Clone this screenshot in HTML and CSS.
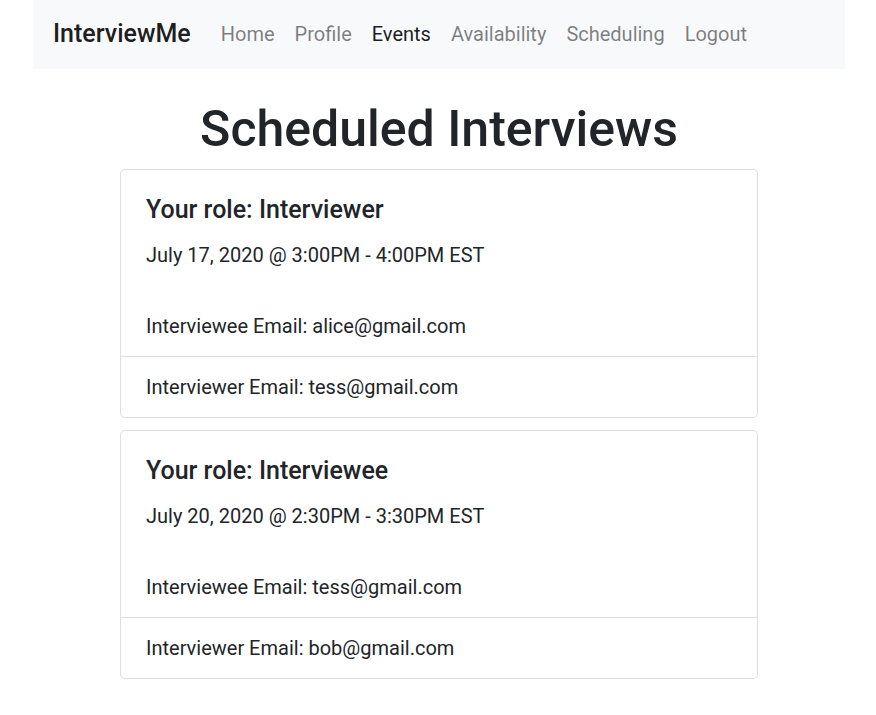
FILE: index.html
```html
<!DOCTYPE html>
<html lang="en">
<head>
<meta charset="utf-8">
<title>InterviewMe - Events</title>
<link rel="stylesheet" href="styles.css">
</head>
<body>
<div class="page">
  <nav class="navbar">
    <a class="brand" href="#">InterviewMe</a>
    <ul class="nav">
      <li><a class="nav-link" href="#">Home</a></li>
      <li><a class="nav-link" href="#">Profile</a></li>
      <li><a class="nav-link active" href="#">Events</a></li>
      <li><a class="nav-link" href="#">Availability</a></li>
      <li><a class="nav-link" href="#">Scheduling</a></li>
      <li><a class="nav-link" href="#">Logout</a></li>
    </ul>
  </nav>
  <h1 class="title">Scheduled Interviews</h1>
  <div class="cards">
    <div class="card">
      <div class="card-body">
        <h5 class="card-title">Your role: Interviewer</h5>
        <p class="card-text">July 17, 2020 @ 3:00PM - 4:00PM EST</p>
      </div>
      <ul class="list-group">
        <li class="list-item">Interviewee Email: alice@gmail.com</li>
        <li class="list-item">Interviewer Email: tess@gmail.com</li>
      </ul>
    </div>
    <div class="card">
      <div class="card-body">
        <h5 class="card-title">Your role: Interviewee</h5>
        <p class="card-text">July 20, 2020 @ 2:30PM - 3:30PM EST</p>
      </div>
      <ul class="list-group">
        <li class="list-item">Interviewee Email: tess@gmail.com</li>
        <li class="list-item">Interviewer Email: bob@gmail.com</li>
      </ul>
    </div>
  </div>
</div>
</body>
</html>
```
FILE: styles.css
```css
* { box-sizing: border-box; }
html, body { margin: 0; padding: 0; }
body {
  font-family: Roboto, "Liberation Sans", sans-serif;
  font-size: 20px;
  line-height: 1.5;
  color: #212529;
  background: #fff;
  padding-left: 2px;
}
.page {
  width: 812px;
  margin: 0 auto;
}
.navbar {
  display: flex;
  align-items: center;
  background: #f8f9fa;
  height: 69px;
  padding: 0 20px 2px;
}
.brand {
  font-size: 25px;
  font-weight: 500;
  color: rgba(0,0,0,.9);
  text-decoration: none;
  margin-right: 20px;
  line-height: 1.5;
}
.nav {
  display: flex;
  list-style: none;
  margin: 0;
  padding: 0;
}
.nav-link {
  display: block;
  padding: 10px;
  color: rgba(0,0,0,.5);
  text-decoration: none;
}
.nav-link.active { color: rgba(0,0,0,.9); }
.title {
  margin: 30px 0 10px;
  text-align: center;
  font-size: 50px;
  font-weight: 500;
  line-height: 1.2;
}
.cards {
  width: 638px;
  margin: 0 auto;
  display: flex;
  flex-direction: column;
  gap: 12px;
}
.card {
  border: 1px solid rgba(0,0,0,.125);
  border-radius: 5px;
  background: #fff;
}
.card-body {
  padding: 25px 25px 26px;
}
.card-title {
  margin: 0 0 15px;
  font-size: 25px;
  font-weight: 500;
  line-height: 1.2;
}
.card-text {
  margin: 0;
  line-height: 1.5;
}
.list-group {
  list-style: none;
  margin: 0;
  padding: 0;
}
.list-item {
  padding: 15px 25px;
  line-height: 1.5;
}
.list-item + .list-item {
  border-top: 1px solid rgba(0,0,0,.125);
}
```
